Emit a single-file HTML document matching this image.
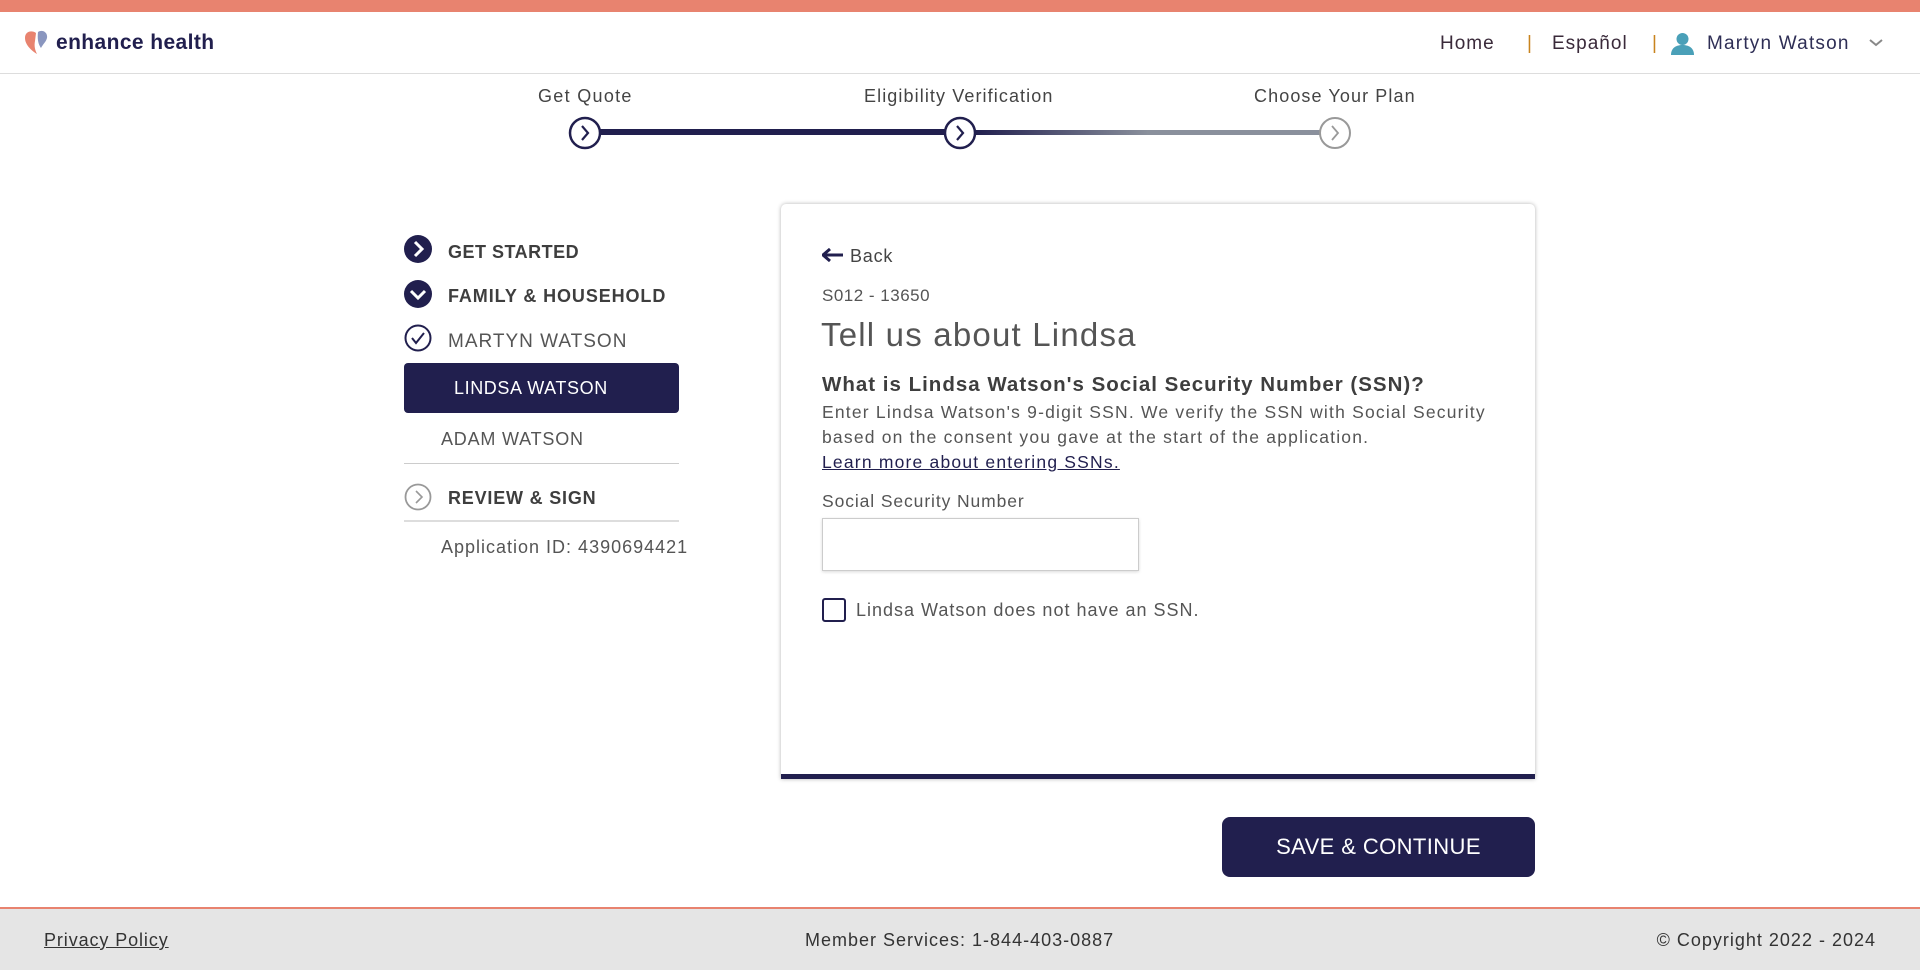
<!DOCTYPE html>
<html><head><meta charset="utf-8"><style>
*{margin:0;padding:0;box-sizing:border-box}
body{width:1920px;height:970px;position:relative;font-family:"Liberation Sans",sans-serif;color:#4a4a4a;background:#fff;overflow:hidden}
.a{position:absolute;white-space:nowrap}
.navy{color:#211f4e}
</style></head><body>
<div class="a" style="left:0;top:0;width:1920px;height:12px;background:#e8836f"></div>
<div class="a" style="left:0;top:73px;width:1920px;height:1px;background:#ddd"></div>
<svg class="a" style="left:24px;top:30px" width="28" height="26" viewBox="0 0 28 26"><path d="M12 3C8 0 1 1 1 8c0 7 7 13 12 16-2-4-3-8-2-13z" fill="#e8836f"/><path d="M14 2c4-3 10 0 9 6-1 4-4 6-6 10-2-3-4-7-3-16z" fill="#8a96bf"/></svg>
<div class="a navy" style="left:56px;top:31px;font-size:21px;font-weight:bold;letter-spacing:0.4px">enhance health</div>
<div class="a" style="left:1440px;top:33px;font-size:19px;color:#3a2a3a;letter-spacing:1px">Home</div>
<div class="a" style="left:1527px;top:33px;font-size:19px;color:#c8841e">|</div>
<div class="a" style="left:1552px;top:33px;font-size:19px;color:#3a2a3a;letter-spacing:1px">Español</div>
<div class="a" style="left:1652px;top:33px;font-size:19px;color:#c8841e">|</div>
<svg class="a" style="left:1670px;top:32px" width="25" height="23" viewBox="0 0 25 23"><circle cx="12.5" cy="7" r="6" fill="#4aa0b8"/><path d="M1 23c0-7 5-10 11.5-10S24 16 24 23z" fill="#4aa0b8"/></svg>
<div class="a" style="left:1707px;top:33px;font-size:19px;color:#2e2e55;letter-spacing:1.2px">Martyn Watson</div>
<svg class="a" style="left:1868px;top:38px" width="16" height="10"><path d="M2 2l6 5 6-5" stroke="#888" stroke-width="2" fill="none"/></svg>

<div class="a" style="left:538px;top:86px;font-size:18px;color:#444;letter-spacing:1.3px">Get Quote</div>
<div class="a" style="left:864px;top:86px;font-size:18px;color:#444;letter-spacing:1.1px">Eligibility Verification</div>
<div class="a" style="left:1254px;top:86px;font-size:18px;color:#444;letter-spacing:1.1px">Choose Your Plan</div>
<div class="a" style="left:600px;top:129px;width:346px;height:6px;background:#211f4e"></div>
<div class="a" style="left:975px;top:130px;width:346px;height:5px;background:linear-gradient(90deg,#211f4e,#8a909c 50%,#8a909c)"></div>
<svg class="a" style="left:568px;top:116px" width="34" height="34"><circle cx="17" cy="17" r="15" fill="#fff" stroke="#211f4e" stroke-width="2.5"/><path d="M14 10l6 7-6 7" stroke="#211f4e" stroke-width="2.2" fill="none"/></svg>
<svg class="a" style="left:943px;top:116px" width="34" height="34"><circle cx="17" cy="17" r="15" fill="#fff" stroke="#211f4e" stroke-width="2.5"/><path d="M14 10l6 7-6 7" stroke="#211f4e" stroke-width="2.2" fill="none"/></svg>
<svg class="a" style="left:1318px;top:116px" width="34" height="34"><circle cx="17" cy="17" r="15" fill="#fff" stroke="#999" stroke-width="2"/><path d="M14 10l6 7-6 7" stroke="#999" stroke-width="1.8" fill="none"/></svg>

<svg class="a" style="left:404px;top:235px" width="28" height="28"><circle cx="14" cy="14" r="14" fill="#211f4e"/><path d="M11 7l7 7-7 7" stroke="#fff" stroke-width="3" fill="none"/></svg>
<div class="a" style="left:448px;top:242px;font-size:18px;font-weight:bold;color:#3e3e3e;letter-spacing:0.5px">GET STARTED</div>
<svg class="a" style="left:404px;top:280px" width="28" height="28"><circle cx="14" cy="14" r="14" fill="#211f4e"/><path d="M7 11l7 7 7-7" stroke="#fff" stroke-width="3" fill="none"/></svg>
<div class="a" style="left:448px;top:286px;font-size:18px;font-weight:bold;color:#3e3e3e;letter-spacing:0.9px">FAMILY &amp; HOUSEHOLD</div>
<svg class="a" style="left:404px;top:324px" width="28" height="28"><circle cx="14" cy="14" r="12.5" fill="none" stroke="#211f4e" stroke-width="2"/><path d="M8 14l4 5 8-10" stroke="#211f4e" stroke-width="2" fill="none"/></svg>
<div class="a" style="left:448px;top:331px;font-size:19px;color:#555;letter-spacing:1px">MARTYN WATSON</div>
<div class="a" style="left:404px;top:363px;width:275px;height:50px;background:#211f4e;border-radius:4px"></div>
<div class="a" style="left:454px;top:378px;font-size:18px;color:#fff;letter-spacing:0.6px">LINDSA WATSON</div>
<div class="a" style="left:441px;top:429px;font-size:18px;color:#555;letter-spacing:0.8px">ADAM WATSON</div>
<div class="a" style="left:404px;top:463px;width:275px;height:1px;background:#ccc"></div>
<svg class="a" style="left:404px;top:483px" width="28" height="28"><circle cx="14" cy="14" r="12.5" fill="none" stroke="#999" stroke-width="1.8"/><path d="M12 8l6 6-6 6" stroke="#999" stroke-width="1.6" fill="none"/></svg>
<div class="a" style="left:448px;top:488px;font-size:18px;font-weight:bold;color:#3e3e3e;letter-spacing:0.8px">REVIEW &amp; SIGN</div>
<div class="a" style="left:404px;top:520px;width:275px;height:2px;background:#ddd"></div>
<div class="a" style="left:441px;top:537px;font-size:18px;color:#555;letter-spacing:1px">Application ID: 4390694421</div>

<div class="a" style="left:781px;top:204px;width:754px;height:575px;background:#fff;border-radius:5px 5px 0 0;box-shadow:0 0 4px rgba(0,0,0,0.3);border-bottom:5px solid #211f4e"></div>
<svg class="a" style="left:822px;top:248px" width="22" height="14"><path d="M1 7h20M8 1L1 7l7 6" stroke="#211f4e" stroke-width="3" fill="none"/></svg>
<div class="a" style="left:850px;top:246px;font-size:18px;color:#444;letter-spacing:0.8px">Back</div>
<div class="a" style="left:822px;top:286px;font-size:17px;color:#555;letter-spacing:0.5px">S012 - 13650</div>
<div class="a" style="left:821px;top:316px;font-size:33px;color:#555;letter-spacing:1.2px">Tell us about Lindsa</div>
<div class="a" style="left:822px;top:373px;font-size:20.5px;font-weight:bold;color:#3e3e3e;letter-spacing:1px">What is Lindsa Watson's Social Security Number (SSN)?</div>
<div class="a" style="left:822px;top:400px;font-size:17.5px;color:#555;line-height:25px;letter-spacing:1.2px">Enter Lindsa Watson's 9-digit SSN. We verify the SSN with Social Security<br>based on the consent you gave at the start of the application.<br><span style="text-decoration:underline;color:#211f4e">Learn more about entering SSNs.</span></div>
<div class="a" style="left:822px;top:491px;font-size:17.5px;color:#555;letter-spacing:0.9px">Social Security Number</div>
<div class="a" style="left:822px;top:518px;width:317px;height:53px;border:1px solid #ccc;box-shadow:0 1px 3px rgba(0,0,0,0.15)"></div>
<div class="a" style="left:822px;top:598px;width:24px;height:24px;border:2px solid #211f4e;border-radius:3px"></div>
<div class="a" style="left:856px;top:600px;font-size:18px;color:#555;letter-spacing:1px">Lindsa Watson does not have an SSN.</div>

<div class="a" style="left:1222px;top:817px;width:313px;height:60px;background:#211f4e;border-radius:8px;color:#fff;font-size:22px;text-align:center;line-height:60px;letter-spacing:0.4px">SAVE &amp; CONTINUE</div>

<div class="a" style="left:0;top:907px;width:1920px;height:63px;background:#e5e5e5;border-top:2px solid #e8836f"></div>
<div class="a" style="left:44px;top:930px;font-size:18px;color:#333;text-decoration:underline;letter-spacing:0.9px">Privacy Policy</div>
<div class="a" style="left:805px;top:930px;font-size:18px;color:#333;letter-spacing:1px">Member Services: 1-844-403-0887</div>
<div class="a" style="right:44px;top:930px;font-size:18px;color:#333;letter-spacing:1px">© Copyright 2022 - 2024</div>
</body></html>
